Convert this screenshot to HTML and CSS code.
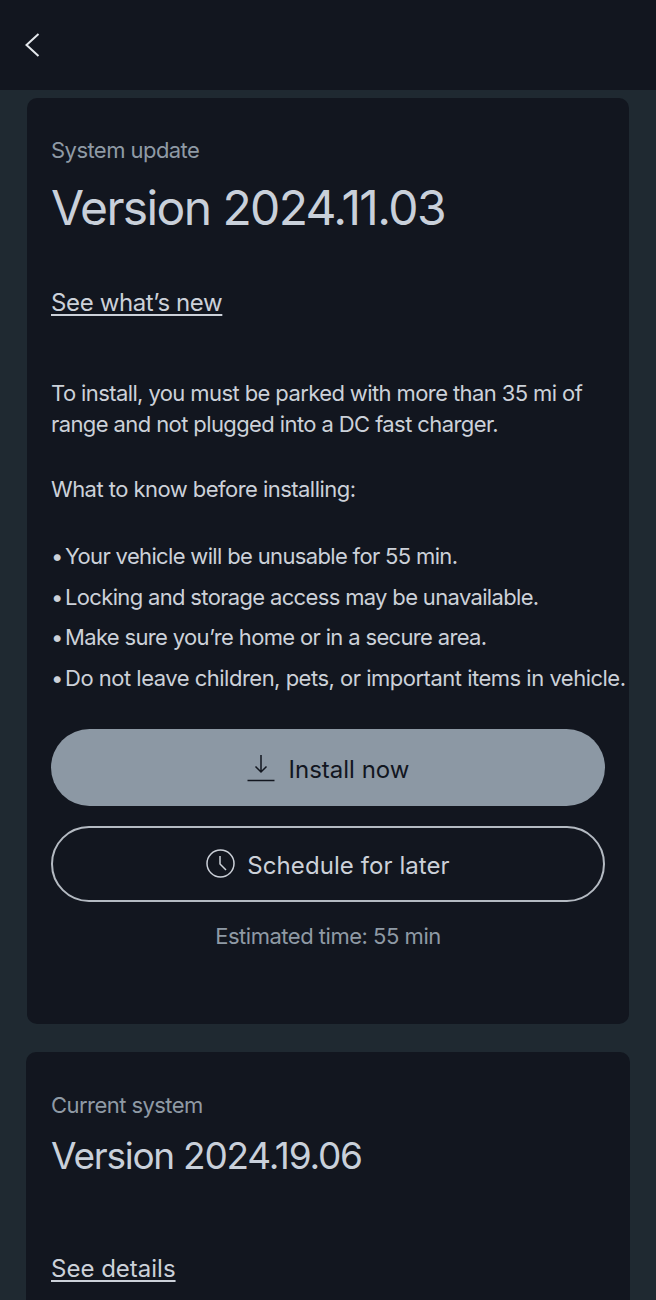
FILE: index.html
```html
<!DOCTYPE html>
<html>
<head>
<meta charset="utf-8"/>
    <title>System update</title>
    <link rel="stylesheet" href="styles.css">
</head>
<body>
    <div class="top">
        <svg class="back" width="16" height="24" viewBox="0 0 16 24"><path d="M14.5 1 L2.5 12 L14.5 23" fill="none" stroke="#e4e8ec" stroke-width="2"/></svg>
    </div>
    <div class="page">
        <div class="card card1">
            <p class="label">System update</p>
            <h1 class="ver">Version 2024.11.03</h1>
            <a class="link link1">See what’s new</a>
            <p class="txt para1">To install, you must be parked with more than 35 mi of<br>range and not plugged into a DC fast charger.</p>
            <p class="txt para2">What to know before installing:</p>
            <ul class="list">
                <li><span class="dot">•</span><span>Your vehicle will be unusable for 55 min.</span></li>
                <li><span class="dot">•</span><span>Locking and storage access may be unavailable.</span></li>
                <li><span class="dot">•</span><span>Make sure you’re home or in a secure area.</span></li>
                <li class="long"><span class="dot">•</span><span>Do not leave children, pets, or important items in vehicle.</span></li>
            </ul>
            <div class="btn btn-fill">
                <svg class="ico-dl" width="28" height="28" viewBox="0 0 28 28"><path d="M14 1 V18 M8.5 12.5 L14 18 L19.5 12.5" fill="none" stroke="#12161f" stroke-width="1.5"/><path d="M0.5 26.5 H27.5" stroke="#12161f" stroke-width="1.5"/></svg>
                <span class="btn-txt">Install now</span>
            </div>
            <div class="btn btn-line">
                <svg width="29" height="29" viewBox="0 0 29 29"><circle cx="14.5" cy="14.5" r="13.5" fill="none" stroke="#ccd1d9" stroke-width="1.5"/><path d="M14 7 V15 L20 21" fill="none" stroke="#ccd1d9" stroke-width="1.5"/></svg>
                <span class="btn-txt">Schedule for later</span>
            </div>
            <p class="est">Estimated time: 55 min</p>
        </div>
        <div class="card card2">
            <p class="label">Current system</p>
            <h2 class="ver2">Version 2024.19.06</h2>
            <a class="link link2">See details</a>
        </div>
    </div>
</body>
</html>
```

FILE: styles.css
```css
html, body { margin: 0; padding: 0; }
body { width: 656px; height: 1300px; overflow: hidden; background: #1f2931; font-family: Inter, "Liberation Sans", sans-serif; color: #ccd1d9; }
p, h1, h2, ul { margin: 0; padding: 0; font-weight: 400; }

.top { height: 90px; background: #12161f; display: flex; align-items: center; padding-left: 24px; box-sizing: border-box; }
.back { display: block; }

.page { padding-top: 8px; display: flex; flex-direction: column; align-items: center; }
.card { background: #12161f; border-radius: 10px; box-sizing: border-box; }
.card1 { width: 602px; height: 926px; padding: 38px 24px 0; }
.card2 { width: 604px; margin-top: 28px; padding: 39px 25px 0; height: 260px; }

.label { font-size: 22px; line-height: 28px; color: #8f9aa5; letter-spacing: -0.55px; }
.ver { font-size: 48px; line-height: 60px; margin-top: 14px; color: #c9d0da; letter-spacing: -1.62px; }
.ver2 { font-size: 37px; line-height: 48px; margin-top: 13px; color: #c9d0da; letter-spacing: -1.25px; }

.link { display: block; font-size: 24px; line-height: 30px; color: #ccd1d9; text-decoration: underline; text-decoration-thickness: 1.5px; text-underline-offset: 3px; }
.link1 { margin-top: 50px; letter-spacing: -0.37px; }
.link2 { margin-top: 74px; letter-spacing: 0; }

.txt { font-size: 22px; line-height: 31px; letter-spacing: -0.6px; }
.para1 { margin-top: 60px; }
.para2 { margin-top: 34px; letter-spacing: -0.54px; }

.list { list-style: none; margin-top: 31px; width: 590px; }
.list li { display: flex; font-size: 22px; line-height: 40.7px; letter-spacing: -0.66px; white-space: nowrap; }
.list li.long { letter-spacing: -0.5px; }
.dot { width: 14px; flex: none; }

.btn { width: 554px; height: 77px; border-radius: 39px; box-sizing: border-box; display: flex; align-items: center; justify-content: center; gap: 14px; font-size: 24px; }
.btn svg { display: block; }
.btn-txt { padding-top: 4px; }
.btn-fill { background: #8c98a4; color: #12161f; margin-top: 30px; }
.ico-dl { margin-top: 2px; }
.btn-line { border: 2px solid #b4bac2; margin-top: 20px; gap: 12px; letter-spacing: 0.08px; height: 76px; }
.est { width: 554px; text-align: center; font-size: 22px; line-height: 28px; color: #8f9aa5; margin-top: 20px; letter-spacing: -0.48px; }
```
